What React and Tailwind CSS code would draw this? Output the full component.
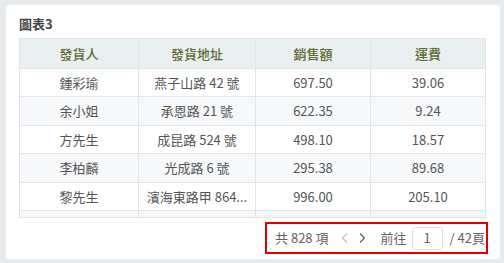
import React from "react";

const rows = [
  ["鍾彩瑜", "燕子山路 42 號", "697.50", "39.06"],
  ["余小姐", "承恩路 21 號", "622.35", "9.24"],
  ["方先生", "成昆路 524 號", "498.10", "18.57"],
  ["李柏麟", "光成路 6 號", "295.38", "89.68"],
  ["黎先生", "濱海東路甲 864...", "996.00", "205.10"],
  ["楊先生", "大慶路 5 號", "180.40", "12.75"],
];

const font = { fontFamily: '"Noto Sans CJK TC", "Noto Sans", sans-serif' };

export default function App() {
  return (
    <div className="w-[504px] h-[263px] bg-[#e8ebee] pt-[5px] pl-[6px] pr-[4px] pb-[4px]" style={font}>
      <div className="bg-white rounded-[3px] h-[254px] w-[494px] pl-[13px] pt-[12px] flex flex-col">
        <div className="text-[13px] font-bold text-[#444] leading-[13px] h-[21px]">圖表3</div>
        <div className="w-[467px] h-[180px] border border-[#dfe5e8] overflow-hidden text-[13px]">
          <div className="grid grid-cols-[119px_117px_115px_1fr] h-[30px] bg-[#eaeff1] border-b border-[#dfe5e8]">
            {["發貨人", "發貨地址", "銷售額", "運費"].map((h, i) => (
              <div key={h} className={"flex items-center justify-center text-[#5d6a2f] font-medium " + (i < 3 ? "border-r border-[#dfe5e8]" : "")}>{h}</div>
            ))}
          </div>
          {rows.map((r, ri) => (
            <div key={ri} className={"grid grid-cols-[119px_117px_115px_1fr] h-[28.4px] border-b border-[#dfe5e8] " + (ri % 2 === 1 ? "bg-[#f6f8fa]" : "bg-white")}>
              {r.map((c, i) => (
                <div key={i} className={"flex items-center justify-center text-[#555] whitespace-nowrap " + (i < 3 ? "border-r border-[#dfe5e8]" : "")}>{c}</div>
              ))}
            </div>
          ))}
        </div>
        <div className="flex justify-end w-[469px] mt-[4px]">
          <div className="border-2 border-[#e00000] h-[32px] w-[223px] flex items-center pl-[8px] text-[13px] text-[#606266]">
            <span>共 828 項</span>
            <svg width="8" height="12" viewBox="0 0 8 12" className="ml-[13px]">
              <path d="M6 1.5 L1.5 6 L6 10.5" fill="none" stroke="#c0c4cc" strokeWidth="1.3" />
            </svg>
            <svg width="8" height="12" viewBox="0 0 8 12" className="ml-[9px]">
              <path d="M2 1.5 L6.5 6 L2 10.5" fill="none" stroke="#606266" strokeWidth="1.3" />
            </svg>
            <span className="ml-[14px]">前往</span>
            <div className="ml-[5px] w-[31px] h-[23px] border border-[#dcdfe6] rounded-[3px] flex items-center justify-center">1</div>
            <span className="ml-[7px]">/ 42頁</span>
          </div>
        </div>
      </div>
    </div>
  );
}
